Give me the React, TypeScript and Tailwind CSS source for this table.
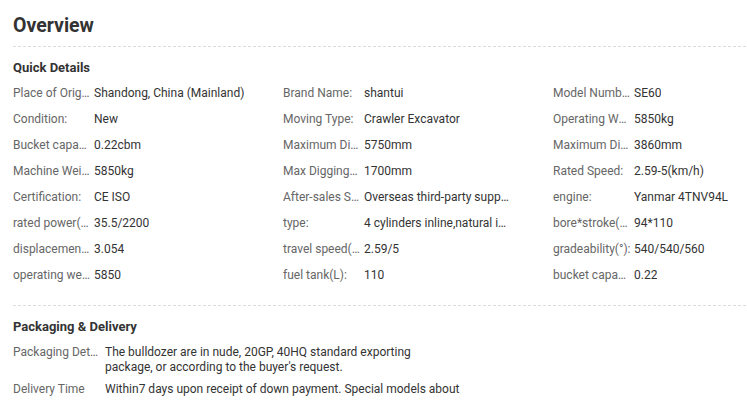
// [label, value, label fits whole, value gets more room]
const quickDetails: [string, string, boolean?, boolean?][] = [
  ['Place of Origin:', 'Shandong, China (Mainland)', false, true],
  ['Brand Name:', 'shantui'],
  ['Model Number:', 'SE60'],
  ['Condition:', 'New'],
  ['Moving Type:', 'Crawler Excavator'],
  ['Operating Weight:', '5850kg'],
  ['Bucket capacity:', '0.22cbm'],
  ['Maximum Digging Depth:', '5750mm'],
  ['Maximum Digging Height:', '3860mm'],
  ['Machine Weight:', '5850kg'],
  ['Max Digging\u00a0Height:', '1700mm'],
  ['Rated Speed:', '2.59-5(km/h)'],
  ['Certification:', 'CE ISO'],
  ['After-sales Service Provided:', 'Overseas third-party support available'],
  ['engine:', 'Yanmar 4TNV94L'],
  ['rated power(kw/rpm):', '35.5/2200'],
  ['type:', '4 cylinders inline,natural intake'],
  ['bore*stroke(mm):', '94*110'],
  ['displacement(L):', '3.054'],
  ['travel speed(km/h):', '2.59/5'],
  ['gradeability(°):', '540/540/560', true],
  ['operating weight(kg):', '5850'],
  ['fuel tank(L):', '110'],
  ['bucket capacity(m³):', '0.22'],
]

export default function App() {
  return (
    <div
      className="bg-white pl-[13px] pr-[1px] text-[#333]"
      style={{ fontFamily: 'Roboto, "Liberation Sans", sans-serif' }}
    >
      {/* OVERVIEW */}
      <div className="pt-[12px] pb-[6px] border-b border-dashed border-[#dcdcdc]">
        <h2 className="text-[19.5px] leading-[28px] font-bold text-[#333]">Overview</h2>
      </div>

      {/* QUICK DETAILS */}
      <div className="pb-[17px] border-b border-dashed border-[#dcdcdc]">
        <h3 className="mt-[11px] text-[13px] leading-[19px] font-bold">Quick Details</h3>
        <div className="mt-[3px] grid grid-cols-[270px_270px_1fr]">
          {quickDetails.map(([label, value, wideLabel, wideValue]) => (
            <div key={label} className="flex h-[26px] items-center text-[12px]">
              <span className={wideLabel ? 'w-[81px] shrink-0 truncate text-[#666]' : 'mr-[4px] w-[77px] shrink-0 truncate text-[#666]'}>
                {label}
              </span>
              <span className={wideValue ? 'max-w-[170px] truncate text-[#333]' : 'max-w-[148px] truncate text-[#333]'}>
                {value}
              </span>
            </div>
          ))}
        </div>
      </div>

      {/* PACKAGING & DELIVERY */}
      <div>
        <h3 className="mt-[11px] text-[13px] leading-[19px] font-bold">Packaging &amp; Delivery</h3>
        <div className="mt-[9px] space-y-[7px] text-[12px] leading-[15px]">
          <div className="flex">
            <span className="mr-[4px] w-[88px] shrink-0 truncate text-[#666]">Packaging Details</span>
            <span className="w-[370px]">
              The bulldozer are in nude, 20GP, 40HQ standard exporting
              <br />
              package, or according to the buyer's request.
            </span>
          </div>
          <div className="flex">
            <span className="mr-[4px] w-[88px] shrink-0 truncate text-[#666]">Delivery Time</span>
            <span className="w-[370px]">Within7 days upon receipt of down payment. Special models about</span>
          </div>
        </div>
      </div>
    </div>
  )
}
